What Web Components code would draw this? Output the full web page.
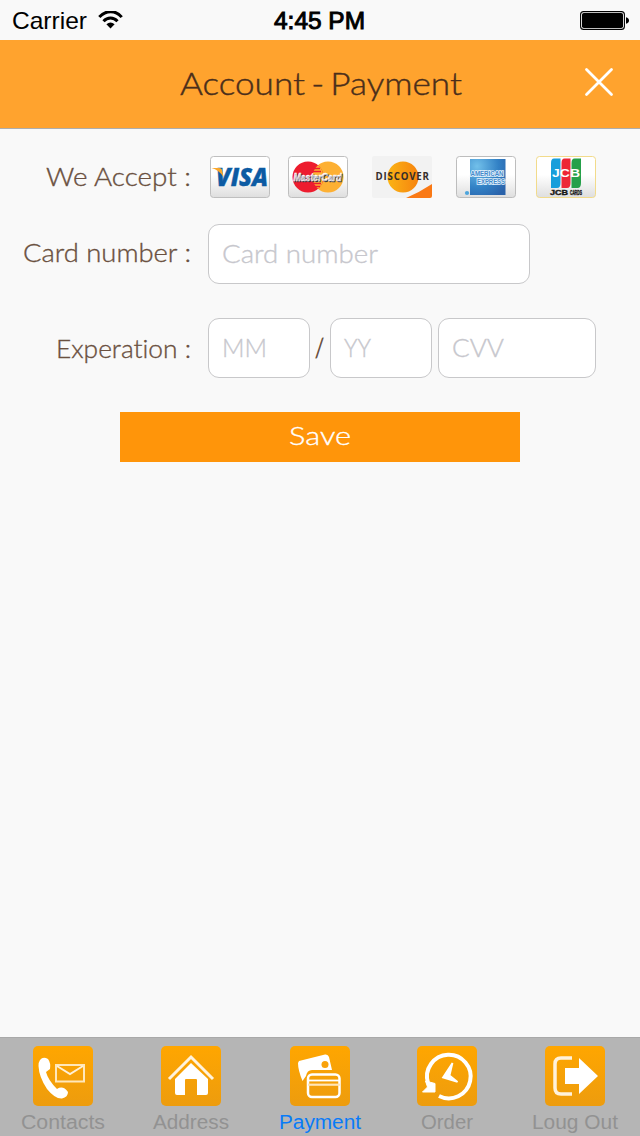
<!DOCTYPE html>
<html lang="en">
<head>
<meta charset="utf-8">
<title>Account - Payment</title>
<style>
html,body{margin:0;height:100%;background:#f9f9f9}
</style>
</head>
<body>
<payment-screen></payment-screen>
<script>
const define=(name,html)=>customElements.define(name,class extends HTMLElement{
  connectedCallback(){
    if(this.shadowRoot)return;
    const t=document.createElement('template');
    t.innerHTML=typeof html==='function'?html(this):html;
    this.attachShadow({mode:'open'}).append(t.content.cloneNode(true));
  }
});

/* A single line of text stretched to the set width; the baseline sits "b" px below the top. */
define('fit-text',el=>{
  const a=n=>el.getAttribute(n);
  return `<style>
  :host{display:block;width:${a('w')}px;height:${a('h')}px}
  svg{display:block;overflow:visible;font-variant-ligatures:none}
  </style><svg width="${a('w')}" height="${a('h')}"><text x="0" y="${a('b')}" fill="currentColor" font-size="${a('s')}" textLength="${a('w')}" lengthAdjust="spacingAndGlyphs">${el.textContent}</text></svg>`;
});

define('status-bar',`<style>
:host{display:grid;grid-template-columns:262px 1fr 60px;height:40px;padding:0 0 0 12px;box-sizing:border-box;background:#f9f9f9;color:#000;font-family:"Liberation Sans",Arial,sans-serif}
.l{display:flex;gap:11px}
.t{stroke:#000;stroke-width:.95}
svg{display:block}
.w,.b{margin-top:11px}
</style>
<div class="l"><fit-text w="75" h="40" b="29" s="24">Carrier</fit-text>
<svg class="w" width="26" height="19" viewBox="0 0 26 19" fill="none" stroke="#000"><path d="M1.300 6.100C8-1.200 17.500-1.200 23.700 6.100" stroke-width="3"/><path d="M5.500 10.300C9.500 6 15.500 6 19.500 10.300" stroke-width="3"/><path d="M8.400 13.300Q12.500 9.600 16.600 13.300L12.500 17.500Z" fill="#000" stroke="none"/></svg></div>
<div class="t"><fit-text w="91" h="40" b="29" s="24">4:45 PM</fit-text></div>
<svg class="b" width="50" height="20" viewBox="0 0 50 20"><rect x=".6" y=".6" width="43.800" height="17.800" rx="3" fill="#fff" stroke="#000" stroke-width="1.100"/><rect x="2" y="2" width="41" height="15" rx="1.800"/><path d="M46 6.200Q49 7 49 9.500T46 12.800Z"/></svg>`);

define('nav-header',`<style>
:host{display:grid;grid-template-columns:180px 1fr 56px;height:89px;box-sizing:border-box;border-bottom:1px solid #adadad;background:#ffa32e;color:#4a2e1b;font-family:Lato,sans-serif;font-weight:300;word-spacing:-3px}
svg{display:block;margin-top:27px}
fit-text{grid-column:2;stroke:#4a2e1b;stroke-width:.4}
</style><fit-text w="282" h="88" b="54.500" s="31">Account - Payment</fit-text>
<svg width="32" height="32" fill="none" stroke="#fff" stroke-width="2.800" stroke-linecap="round"><path d="M2.500 2.500L27.500 27.500M27.500 2.500L2.500 27.500"/></svg>`);

const cardArt={
visa:`<rect x=".5" y=".5" width="59" height="41" rx="3" fill="url(#g)" stroke="#bfbfbf"/><text x="6" y="29.800" font-family="Open Sans" font-weight="800" font-style="italic" font-size="25" textLength="52" lengthAdjust="spacingAndGlyphs" fill="#0c5ba3" stroke="#0c5ba3" stroke-width=".4">VISA</text><path d="M1.500 12H9Q12 12 12.300 15L13.500 21Q9 14 1.500 12Z" fill="#f9a72b"/>`,
master:`<rect x=".5" y=".5" width="59" height="41" rx="3" fill="url(#g)" stroke="#bfbfbf"/><circle cx="40" cy="21" r="15.500" fill="#fdb033"/><circle cx="20" cy="21" r="15.500" fill="#ed1c2e"/><path d="M30 9.200A15.500 15.500 0 0 1 30 32.800A15.500 15.500 0 0 1 30 9.200Z" fill="#fdb033"/><path d="M26 12.500H32M25 15.500H33M25 27.500H33M26 30.500H32" stroke="#ed1c2e" stroke-width="1.500"/><text x="5.500" y="24.800" style="text-shadow:1px 1px .5px #334" font-family="Liberation Sans" font-weight="bold" font-style="italic" font-size="11.500" textLength="48" lengthAdjust="spacingAndGlyphs" fill="#fff" stroke="#fff" stroke-width=".5">MasterCard</text>`,
discover:`<rect width="60" height="42" rx="2" fill="#f2f2f2"/><circle cx="31" cy="21" r="15.500" fill="url(#o)"/><path d="M34 42Q48 36 60 28V40Q60 42 58 42Z" fill="#fa7915"/><text x="3.500" y="24" font-family="Open Sans" font-weight="700" font-size="9.700" textLength="53.500" fill="#352d2a">DISCOVER</text>`,
amex:`<rect x=".5" y=".5" width="59" height="41" rx="3" fill="url(#g)" stroke="#bdbdbd"/><rect x="14" y="3" width="35.500" height="36" fill="url(#b)"/><g font-family="Liberation Sans" font-weight="bold" fill="#4389cb" font-size="6.500" stroke="#e5f3fc" stroke-width="1.700" paint-order="stroke"><text x="14.500" y="20" textLength="33" lengthAdjust="spacingAndGlyphs">AMERICAN</text><text x="21" y="27.700" textLength="28" lengthAdjust="spacingAndGlyphs">EXPRESS</text></g><circle cx="11" cy="37" r="2.100" fill="#4da5dc"/>`,
jcb:`<rect x=".5" y=".5" width="59" height="41" rx="3" fill="url(#g)" stroke="#f2db8b"/><path d="M15 7Q15 2.500 18 2.500H24.500V27Q24.500 32 21 32H15Z" fill="#179edb"/><path d="M25.500 7Q25.500 2.500 28.500 2.500H34.500V27Q34.500 32 31 32H25.500Z" fill="#ed2636"/><path d="M35.500 7Q35.500 2.500 38.500 2.500H45V27Q45 32 41.500 32H35.500Z" fill="#25a04a"/><text x="16" y="20.700" font-family="Liberation Sans" font-weight="bold" font-size="10" textLength="28" lengthAdjust="spacingAndGlyphs" fill="#fff">JCB</text><g font-family="Liberation Sans" font-weight="bold" font-size="7.300" fill="#171717" stroke="#171717" stroke-width=".4"><text x="14" y="39" textLength="18" lengthAdjust="spacingAndGlyphs">JCB</text><text x="34" y="39" font-size="6.500" textLength="12" lengthAdjust="spacingAndGlyphs">CARDS</text></g>`};
define('card-logo',el=>`<style>:host{display:block;width:60px;height:42px}svg{display:block;overflow:visible}</style><svg width="60" height="42"><defs><linearGradient id="g" x2="0" y2="1"><stop offset=".45" stop-color="#fff"/><stop offset="1" stop-color="#dedede"/></linearGradient><linearGradient id="o" x2="1" y2="0"><stop stop-color="#fbb414"/><stop offset="1" stop-color="#f6830f"/></linearGradient><radialGradient id="b" cx=".2" cy=".2" r="1"><stop stop-color="#72c0ea"/><stop offset=".6" stop-color="#3281c5"/><stop offset="1" stop-color="#2a62aa"/></radialGradient></defs>${cardArt[el.getAttribute('type')]}</svg>`);

define('text-field',`<style>:host{display:block;box-sizing:border-box;height:60px;padding-left:13px;border:1px solid #c8c8ca;border-radius:11px;background:#fff;color:#c7c7cd}</style><slot></slot>`);

define('form-row',`<style>
:host{display:grid;grid-template-columns:191px 1fr;column-gap:17px;height:60px;color:#6a5040}
.k{display:flex;justify-content:flex-end}.v{display:flex}
</style><div class="k"><slot name="label"></slot></div><div class="v"><slot></slot></div>`);

define('payment-form',`<style>
:host{display:flex;flex-direction:column;flex:1;font-family:Lato,sans-serif;font-weight:300;padding-top:27px}
fit-text{stroke:currentColor;stroke-width:.35}
.cards{height:42px;margin-bottom:26px}
.logos{display:grid;grid-template-columns:78px 84px 84px 80px 60px;margin-left:2px}
.number{margin-bottom:34px}
.save{display:flex;justify-content:center;width:400px;height:50px;margin:34px auto 0;background:#ff950a;color:#fff}
</style>
<form-row class="cards"><fit-text slot="label" w="145" h="42" b="29.500" s="25">We Accept :</fit-text>
<div class="logos"><card-logo type="visa"></card-logo><card-logo type="master"></card-logo><card-logo type="discover"></card-logo><card-logo type="amex"></card-logo><card-logo type="jcb"></card-logo></div></form-row>
<form-row class="number"><fit-text slot="label" w="168" h="60" b="37.500" s="25">Card number :</fit-text><text-field style="width:322px"><fit-text w="156" h="58" b="37.500" s="25">Card number</fit-text></text-field></form-row>
<form-row><fit-text slot="label" w="135" h="60" b="39.500" s="25">Experation :</fit-text>
<text-field style="width:102px"><fit-text w="45" h="58" b="37.500" s="24.500">MM</fit-text></text-field>
<fit-text style="margin:0 6px 0 5px;stroke-width:.8" w="9" h="60" b="39" s="25">/</fit-text>
<text-field style="width:102px"><fit-text w="27" h="58" b="37.500" s="24.500">YY</fit-text></text-field>
<text-field style="width:158px;margin-left:6px"><fit-text w="52" h="58" b="37.500" s="24.500">CVV</fit-text></text-field></form-row>
<div class="save"><fit-text w="62" h="50" b="33" s="26">Save</fit-text></div>`);

const icons={
contacts:`<path d="M7 14Q10 10 15 13Q18 17 17 23L13 26Q15 34 24 43Q30 39 35 46Q35 51 29 52.500Q22 53 14 43Q6 31 5.500 20Q5.500 16 7 14Z" fill="#fff"/><path d="M23 19H51V35.500H23Z" stroke="#ffe7ba" stroke-width="2"/><path d="M24 20L37 28L50 20" stroke="#fff0d5" stroke-width="2"/>`,
address:`<path d="M30 17L47 33V47Q47 49 45 49H36V34Q36 33 35 33H25Q24 33 24 34V49H16Q14 49 14 47V33Z" fill="#fff"/><path d="M8 33L30 11L52 33" stroke="#fff3dd" stroke-width="3"/>`,
payment:`<path d="M9 15L35 8.500Q38 8 39 11L42 24H22Q17 24 16 30L12.500 35Q8 24 8 17Z" fill="#fff"/><circle cx="35" cy="18.500" r="3.500" fill="#f9a20b"/><rect x="18" y="28.500" width="31.500" height="22.500" rx="4" stroke="#fff" stroke-width="2.500"/><path d="M18 34.500H50" stroke="#fff" stroke-width="1.800"/><path d="M18 38.700H50" stroke="#ffe5b7" stroke-width="2.200"/>`,
order:`<path d="M11 37A21.800 21.800 0 1 1 22 50" stroke="#fff" stroke-width="4"/><path d="M8.500 35L18 37.500V46H5.500L10.500 41Z" fill="#fff" stroke="#fff"/><path d="M35.500 17L32.500 29.500L40.500 36L26 31.500Z" fill="#fff" stroke="#fff" stroke-width="1.800"/>`,
logout:`<path d="M27 12H16Q10 12 10 18V42Q10 48 16 48H27" stroke="#fff2dc" stroke-width="3.500"/><path d="M20 22H34V12L53 30L34 48V38H20Z" fill="#fff"/>`};
define('tab-item',el=>`<style>
:host{display:flex;flex-direction:column;align-items:center;box-sizing:border-box;padding-top:8px;color:#929292}
:host([active]){color:#087bf8}svg{display:block}
</style><svg width="60" height="60" fill="none"><defs><linearGradient id="a" x2="0" y2="1"><stop stop-color="#ffa600"/><stop offset="1" stop-color="#ed9c0e"/></linearGradient></defs><rect width="60" height="60" rx="5" fill="url(#a)"/>${icons[el.getAttribute('icon')]}</svg><slot></slot>`);

define('tab-bar',`<style>
:host{display:grid;grid-template-columns:126px 130px 128px 126px 130px;height:99px;box-sizing:border-box;background:#b5b5b5;border-top:1px solid #a9a9a9;font-family:"Liberation Sans",Arial,sans-serif}
</style>
<tab-item icon="contacts"><fit-text w="84" h="30" b="23" s="20">Contacts</fit-text></tab-item>
<tab-item icon="address"><fit-text w="76" h="30" b="23" s="20">Address</fit-text></tab-item>
<tab-item icon="payment" active><fit-text w="82" h="30" b="23" s="20">Payment</fit-text></tab-item>
<tab-item icon="order"><fit-text w="52" h="30" b="23" s="20">Order</fit-text></tab-item>
<tab-item icon="logout"><fit-text w="86" h="30" b="23" s="20">Loug Out</fit-text></tab-item>`);

define('payment-screen',`<style>:host{display:flex;flex-direction:column;width:640px;height:1136px;background:#f9f9f9}</style>
<status-bar></status-bar><nav-header></nav-header><payment-form></payment-form><tab-bar></tab-bar>`);
</script>
</body>
</html>
